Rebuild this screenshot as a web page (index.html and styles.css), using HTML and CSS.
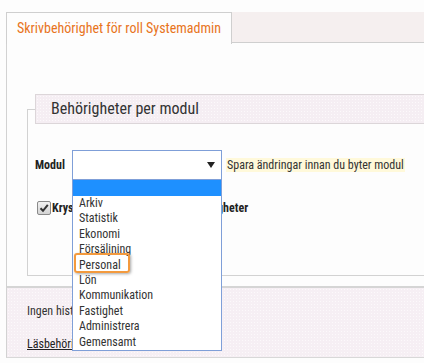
FILE: index.html
```html
<!DOCTYPE html>
<html lang="sv">
<head>
<meta charset="utf-8">
<title>Skrivbehörighet</title>
<link rel="stylesheet" href="styles.css">
</head>
<body>
<div class="page">
  <div class="tabs">
    <div class="tab">Skrivbehörighet för roll Systemadmin</div>
    <div class="tabfill"></div>
  </div>
  <div class="panel">
    <div class="panel-top">
      <fieldset class="box">
        <legend class="legend">Behörigheter per modul</legend>
        <div class="modul-row">
          <span class="modul-label">Modul</span>
          <div class="select-wrap">
            <div class="select">
              <svg class="arrow" width="8" height="6" viewBox="0 0 8 6"><path d="M0 0H8L4 6Z" fill="#222"/></svg>
            </div>
            <div class="dropdown">
              <div class="opt opt-sel"></div>
              <div class="opt">Arkiv</div>
              <div class="opt">Statistik</div>
              <div class="opt">Ekonomi</div>
              <div class="opt">Försäljning</div>
              <div class="opt">Personal</div>
              <div class="opt">Lön</div>
              <div class="opt">Kommunikation</div>
              <div class="opt">Fastighet</div>
              <div class="opt">Administrera</div>
              <div class="opt">Gemensamt</div>
            </div>
            <div class="mark"></div>
          </div>
          <span class="note">Spara ändringar innan du byter modul</span>
        </div>
        <div class="check-row">
          <span class="cb"><svg width="10" height="10" viewBox="0 0 10 10"><path d="M1.5 5.2L4 7.8L8.8 1.8" fill="none" stroke="#333" stroke-width="2"/></svg></span>
          <span class="check-label">Kryssa i alla modulens skrivbehörigheter</span>
        </div>
      </fieldset>
    </div>
    <div class="panel-bottom">
      <div class="hist">Ingen historik finns för rollen</div>
      <a class="link" href="#">Läsbehörighet för roll Systemadmin</a>
    </div>
  </div>
</div>
</body>
</html>
```
FILE: styles.css
```css
html, body {
  margin: 0;
  padding: 0;
  background: #fdfdfd;
  overflow: hidden;
  font-family: "Roboto Condensed", Roboto, "Liberation Sans", sans-serif;
  color: #333;
}
.page {
  padding: 12px 0 0 6px;
  width: 700px;
}
.tabs {
  display: flex;
}
.tab {
  width: 214px;
  height: 31px;
  line-height: 30px;
  padding-left: 10px;
  border: 1px solid #cfcfcf;
  border-bottom: none;
  background: #fdfdfd;
  color: #e8741c;
  font-size: 14px;
  white-space: nowrap;
}
.tabfill {
  flex: 1;
  height: 30px;
  background: #f5efef;
  border-bottom: 1px solid #cfcfcf;
}
.panel {
  border-left: 1px solid #d2d2d2;
  border-bottom: 1px solid #d8d8d8;
}
.panel-top {
  padding: 50px 0 10px 0;
  border-bottom: 2px solid #d5d5d5;
}
.box {
  margin: 0 0 0 20px;
  padding: 0 0 60px 7px;
  border: 1px solid #d2d2d2;
  min-width: 0;
}
.legend {
  width: 600px;
  height: 30px;
  box-sizing: border-box;
  padding: 0 0 0 15px;
  border: 1px solid #dcd6d9;
  line-height: 28px;
  font-size: 16px;
  color: #333;
  background: #f5eef3 radial-gradient(circle, #fcf9fb 0.6px, transparent 1px) 0 0 / 3px 3px;
}
.modul-row {
  display: flex;
  align-items: center;
  margin-top: 26px;
}
.modul-label {
  width: 37px;
  font-size: 12px;
  font-weight: bold;
  color: #222;
}
.select-wrap {
  position: relative;
}
.select {
  width: 150px;
  height: 30px;
  box-sizing: border-box;
  border: 1px solid #7f9fd8;
  background: #fff;
  display: flex;
  align-items: center;
  justify-content: flex-end;
  padding-right: 6px;
}
.dropdown {
  position: absolute;
  top: 30px;
  left: 0;
  width: 150px;
  box-sizing: border-box;
  border: 1px solid #7f9fd8;
  border-top: none;
  background: #fff;
  z-index: 2;
}
.opt {
  height: 15.4px;
  line-height: 15.4px;
  padding-left: 6px;
  font-size: 12px;
  color: #333;
  white-space: nowrap;
  overflow: hidden;
}
.opt-sel {
  height: 16px;
  background: #1e90ff;
}
.mark {
  position: absolute;
  left: 2px;
  top: 103px;
  width: 52px;
  height: 16px;
  border: 2px solid #f39a3e;
  border-radius: 3px;
  box-shadow: 1px 1px 3px rgba(0, 0, 0, 0.35);
  z-index: 3;
}
.note {
  margin-left: 4px;
  padding: 0 1px;
  font-size: 12px;
  line-height: 14px;
  background: #fff9da;
  color: #333;
  white-space: nowrap;
}
.check-row {
  display: flex;
  align-items: center;
  margin-top: 21px;
  margin-left: 2px;
}
.cb {
  width: 12px;
  height: 12px;
  border: 1px solid #8a8a8a;
  border-radius: 2px;
  background: linear-gradient(#f2f2f2, #d4d4d4);
  display: flex;
  align-items: center;
  justify-content: center;
}
.check-label {
  margin-left: 1px;
  font-size: 12px;
  font-weight: bold;
  color: #222;
  white-space: nowrap;
}
.panel-bottom {
  height: 69px;
  padding-left: 20px;
  box-sizing: border-box;
  background: #f6eff4 radial-gradient(circle, #fcf9fb 0.6px, transparent 1px) 0 0 / 3px 3px;
  font-size: 12px;
}
.hist {
  padding-top: 16px;
  line-height: 14px;
}
.link {
  display: inline-block;
  margin-top: 19px;
  color: #222;
  line-height: 14px;
}
```
